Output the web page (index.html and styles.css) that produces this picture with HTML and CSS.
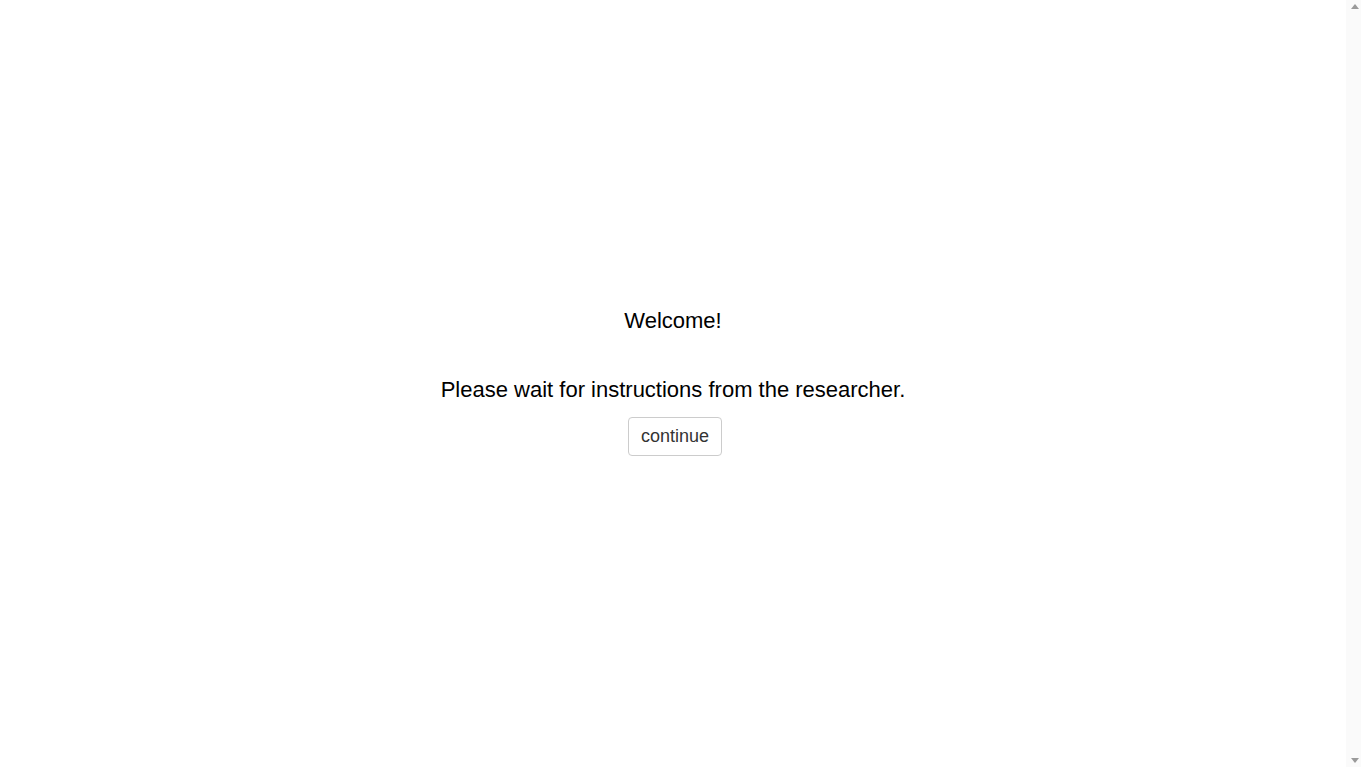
FILE: index.html
```html
<!DOCTYPE html>
<html lang="en">
<head>
<meta charset="utf-8">
<title>Experiment</title>
<link rel="stylesheet" href="styles.css">
</head>
<body>
<main class="display">
  <div class="content">
    <p class="welcome">Welcome!</p>
    <p class="instructions">Please wait for instructions from the researcher.</p>
    <button class="btn" type="button">continue</button>
  </div>
</main>
<div class="scrollbar" aria-hidden="true">
  <svg class="arrow" width="8" height="5" viewBox="0 0 8 5"><polygon points="4,0 8,5 0,5" fill="#9a9a9a"/></svg>
  <svg class="arrow" width="8" height="5" viewBox="0 0 8 5"><polygon points="0,0 8,0 4,5" fill="#9a9a9a"/></svg>
</div>
</body>
</html>
```
FILE: styles.css
```css
html {
  background: #fff;
}
body {
  margin: 0;
  display: flex;
  height: 100vh;
  overflow: hidden;
  font-family: "Liberation Sans", Arial, sans-serif;
  color: #000;
}
.display {
  flex: 1;
  box-sizing: border-box;
  padding-bottom: 4px;
  display: flex;
  align-items: center;
  justify-content: center;
}
.scrollbar {
  width: 15px;
  flex: 0 0 15px;
  background: #fafafa;
  display: flex;
  flex-direction: column;
  justify-content: space-between;
  align-items: center;
  padding: 4px 0 4px 3px;
  box-sizing: border-box;
}
.arrow {
  display: block;
}
.content {
  display: flex;
  flex-direction: column;
  align-items: center;
  text-align: center;
}
.welcome,
.instructions {
  margin: 0;
  font-size: 22px;
  line-height: 25px;
}
.welcome {
  margin-bottom: 44px;
}
.instructions {
  margin-bottom: 15px;
}
.btn {
  font-family: "Liberation Sans", Arial, sans-serif;
  font-size: 18px;
  line-height: 25px;
  color: #333;
  background: #fff;
  border: 1px solid #ccc;
  border-radius: 4px;
  padding: 6px 12px;
  margin: 0 0 0 4px;
  cursor: pointer;
}
```
